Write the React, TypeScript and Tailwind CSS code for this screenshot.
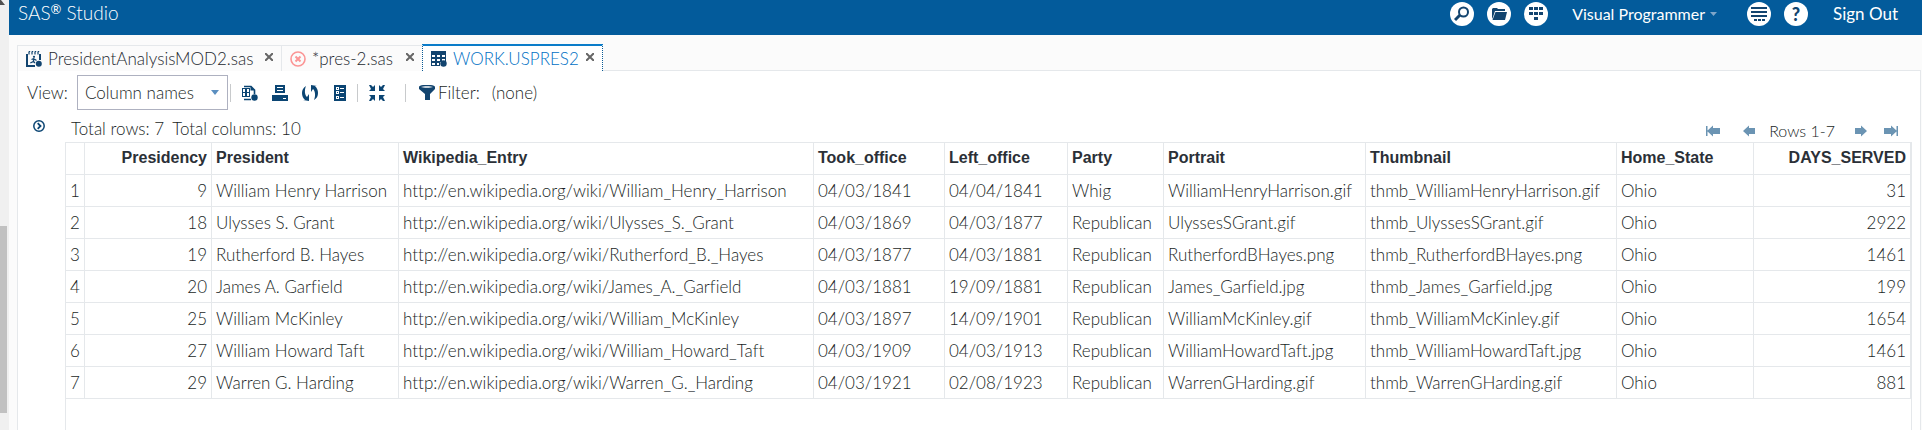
import { useState, type ReactNode } from "react";

type Align = "left" | "right";

const columns: { name: string; width: string; align: Align }[] = [
  { name: "Presidency", width: "w-[127px]", align: "right" },
  { name: "President", width: "w-[187px]", align: "left" },
  { name: "Wikipedia_Entry", width: "w-[415px]", align: "left" },
  { name: "Took_office", width: "w-[131px]", align: "left" },
  { name: "Left_office", width: "w-[123px]", align: "left" },
  { name: "Party", width: "w-[96px]", align: "left" },
  { name: "Portrait", width: "w-[202px]", align: "left" },
  { name: "Thumbnail", width: "w-[251px]", align: "left" },
  { name: "Home_State", width: "w-[137px]", align: "left" },
  { name: "DAYS_SERVED", width: "w-auto", align: "right" },
];

const wiki = "http://en.wikipedia.org/wiki/";

const rows: string[][] = [
  ["9", "William Henry Harrison", wiki + "William_Henry_Harrison", "04/03/1841", "04/04/1841", "Whig", "WilliamHenryHarrison.gif", "thmb_WilliamHenryHarrison.gif", "Ohio", "31"],
  ["18", "Ulysses S. Grant", wiki + "Ulysses_S._Grant", "04/03/1869", "04/03/1877", "Republican", "UlyssesSGrant.gif", "thmb_UlyssesSGrant.gif", "Ohio", "2922"],
  ["19", "Rutherford B. Hayes", wiki + "Rutherford_B._Hayes", "04/03/1877", "04/03/1881", "Republican", "RutherfordBHayes.png", "thmb_RutherfordBHayes.png", "Ohio", "1461"],
  ["20", "James A. Garfield", wiki + "James_A._Garfield", "04/03/1881", "19/09/1881", "Republican", "James_Garfield.jpg", "thmb_James_Garfield.jpg", "Ohio", "199"],
  ["25", "William McKinley", wiki + "William_McKinley", "04/03/1897", "14/09/1901", "Republican", "WilliamMcKinley.gif", "thmb_WilliamMcKinley.gif", "Ohio", "1654"],
  ["27", "William Howard Taft", wiki + "William_Howard_Taft", "04/03/1909", "04/03/1913", "Republican", "WilliamHowardTaft.jpg", "thmb_WilliamHowardTaft.jpg", "Ohio", "1461"],
  ["29", "Warren G. Harding", wiki + "Warren_G._Harding", "04/03/1921", "02/08/1923", "Republican", "WarrenGHarding.gif", "thmb_WarrenGHarding.gif", "Ohio", "881"],
];

function Icon({ children, className = "size-4" }: { children: ReactNode; className?: string }) {
  return (
    <svg viewBox="0 0 16 16" className={`${className} shrink-0`} fill="currentColor" aria-hidden="true">
      {children}
    </svg>
  );
}

function IconButton({ label, children, className = "" }: { label: string; children: ReactNode; className?: string }) {
  return (
    <button type="button" aria-label={label} title={label} className={`shrink-0 text-[#0b4573] ${className}`}>
      {children}
    </button>
  );
}

function RoundButton({ label, children }: { label: string; children: ReactNode }) {
  return (
    <button
      type="button"
      aria-label={label}
      title={label}
      className="flex size-6 shrink-0 items-center justify-center rounded-full bg-white text-[#12446f]"
    >
      {children}
    </button>
  );
}

const ProgramIcon = () => (
  <Icon>
    <path d="M0 3h2v11h7v2H0zM13 3h2v6h-2z" />
    <path d="M4 0L3 1v2.500M7 0L6 1v2.500M10 0L9 1v2.500M13 0l-1 1v2.500" fill="none" stroke="currentColor" strokeWidth="1.200" />
    <circle cx="8" cy="5.800" r="1.100" />
    <path d="M5.500 8.500l2-.7 1.500.7 1.500 1M8 8l-.7 2.500-3 1.500M7.500 10.500L9 12" fill="none" stroke="currentColor" strokeWidth="1.300" />
    <circle cx="12.800" cy="12.800" r="3" />
  </Icon>
);

const ErrorIcon = () => (
  <Icon className="size-4 text-[#fb9595]">
    <circle cx="8" cy="8" r="7" fill="none" stroke="currentColor" strokeWidth="1.600" />
    <path d="M5.500 5.500l5 5M10.500 5.500l-5 5" stroke="currentColor" strokeWidth="2" />
  </Icon>
);

const TableIcon = () => (
  <Icon>
    <path
      fillRule="evenodd"
      d="M0 0h15v11H9v4H0zM1 4v2h3V4zm5 0v2h3V4zm5 0v2h3V4zM1 8v2h3V8zm5 0v2h3V8zm5 0v2h3V8zM1 12v2h3v-2zm5 0v2h2v-2z"
    />
    <circle cx="12.500" cy="12.500" r="3.200" />
  </Icon>
);

const PropertiesIcon = () => (
  <Icon>
    <path fillRule="evenodd" d="M0 3h8v9H0zM1 4v3h2V4zm4 0v3h2V4zM1 8v3h2V8zm4 0v3h2V8z" />
    <path d="M2 1.500h7l3.500 3.500v4M2 14.500h7" fill="none" stroke="currentColor" strokeWidth="1.600" />
    <path d="M8.500 1v4.500H13z" />
    <circle cx="12.500" cy="12.500" r="3.200" />
  </Icon>
);

const PrintIcon = () => (
  <Icon>
    <path fillRule="evenodd" d="M3 0h10v8H3zM5 2v1h6V2zm0 3v1h6V5zM0 10h16v6H0zm11 3v1h3v-1z" />
  </Icon>
);

const RefreshIcon = () => (
  <Icon>
    <path d="M4 1C1 3 0 5 0 8c0 3 1 5 3 7H1l6 1V9L5 12C3 10 2 6 4 1z" />
    <path d="M12 15c3-2 4-4 4-7 0-3-1-5-3-7h2L9 0v7l2-3c2 2 3 6 1 11z" />
  </Icon>
);

const ColumnsIcon = () => (
  <Icon>
    <path
      fillRule="evenodd"
      d="M2 0h12v16H2zM4 2v3h3V2zm0 4v3h3V6zm0 5v3h3v-3zM8 3v1h4V3zm0 4v1h4V7zm0 5v1h4v-1z"
    />
    <path d="M5 3h1v1H5zM5 7h1v1H5zM5 12h1v1H5z" />
  </Icon>
);

const CollapseIcon = () => (
  <Icon>
    <path d="M0 0h2l2 2 2-2v6H0l2-2zM16 0h-2l-2 2-2-2v6h6l-2-2zM0 16h2l2-2 2 2v-6H0l2 2zM16 16h-2l-2-2-2 2v-6h6l-2 2z" />
  </Icon>
);

const FilterIcon = () => (
  <Icon>
    <path fillRule="evenodd" d="M0 2c0-3 16-3 16 0v2l-5 5v6H6V9L0 4zm2 0c2 1 10 1 12 0-2-1-10-1-12 0z" />
  </Icon>
);

function Arrow({ flip = false, bar = false }: { flip?: boolean; bar?: boolean }) {
  return (
    <svg viewBox="0 0 14 12" className={`h-3 w-3.5 ${flip ? "-scale-x-100" : ""}`} fill="currentColor" aria-hidden="true">
      <path d={bar ? "M1 6l6-5.500V3h7v6H7v2.500zM0 1h1.500v10H0z" : "M1 6l6-5.500V3h6v6H7v2.500z"} />
    </svg>
  );
}

function Tab({ icon, title, active = false }: { icon: ReactNode; title: string; active?: boolean }) {
  return (
    <div
      className={
        active
          ? "flex h-[27px] items-center border-x border-t-2 border-x-[#0b5a94] border-t-[#0a7cc9] bg-white pr-2 pl-2 [border-left-style:dotted] [border-right-style:dotted]"
          : "flex h-[26px] items-center border-t border-l border-[#e5e8eb] bg-[#fbfbfb] pr-2 pl-2"
      }
    >
      <button type="button" role="tab" aria-selected={active} className="flex items-center gap-[6px] text-[#12446f]">
        {icon}
        <span className={active ? "text-[#0070c4]" : "text-[#23282f]"}>{title}</span>
      </button>
      <button type="button" aria-label={`Close ${title}`} className="ml-auto text-[#666]">
        <svg viewBox="0 0 8 8" className="mb-1 size-2" aria-hidden="true">
          <path d="M0 0l8 8M8 0L0 8" stroke="currentColor" strokeWidth="2" />
        </svg>
      </button>
    </div>
  );
}

const Separator = ({ className = "" }: { className?: string }) => (
  <span className={`h-[18px] w-px shrink-0 bg-[#c8cacc] ${className}`} />
);

export default function App() {
  const [view, setView] = useState("Column names");

  return (
    <div className="flex min-h-screen bg-[#fbfbfb] font-[Lato,sans-serif] text-[17px] leading-5 font-light whitespace-nowrap text-[#1a1f26] [font-variant-ligatures:none]">
      <div className="flex w-[9px] shrink-0 flex-col justify-between bg-[#f0f0f0] pb-[17px]" aria-hidden="true">
        <svg viewBox="0 0 5 5" className="size-[5px]" fill="#505050">
          <path d="M0 0h1l4 5H0z" />
        </svg>
        <div className="h-[187px] w-[7px] bg-[#c1c1c1]" />
      </div>

      <div className="flex min-w-0 flex-1 flex-col">
        <header className="flex h-[35px] items-start bg-[#035b9b] pr-6 pl-[9px] font-normal text-white">
          <h1 className="mt-[3px] text-[19px] leading-5 font-light">
            SAS<sup className="top-[-6px] text-[13px] leading-none font-normal">®</sup> Studio
          </h1>
          <nav className="mt-px ml-auto flex items-center text-base">
            <div className="flex items-center gap-[13px]">
              <RoundButton label="Search">
                <Icon>
                  <circle cx="9.500" cy="6" r="4.500" fill="none" stroke="currentColor" strokeWidth="2" />
                  <path d="M6 9l-5 5" stroke="currentColor" strokeWidth="3" />
                </Icon>
              </RoundButton>
              <RoundButton label="Open">
                <Icon>
                  <path d="M1 13V3l1-1h4l1 1h7v2H4L2 11z" />
                  <path d="M4.500 6H16l-2 8H1.500z" />
                </Icon>
              </RoundButton>
              <RoundButton label="More application options">
                <Icon>
                  <path d="M1 1h4v3H1zM6 1h4v3H6zM11 1h4v3h-4zM1 6h4v3H1zM6 6h4v3H6zM11 6h4v3h-4zM6 11h4v3H6z" />
                </Icon>
              </RoundButton>
            </div>
            <button type="button" className="ml-6 flex items-center gap-[5px]">
              Visual Programmer
              <svg viewBox="0 0 7 4" className="h-1 w-[7px]" fill="#7fa6c9" aria-hidden="true">
                <path d="M0 0h7L3.500 4z" />
              </svg>
            </button>
            <div className="ml-[30px] flex items-center gap-[13px]">
              <RoundButton label="Options">
                <Icon>
                  <path d="M0 1h16v2H0zM0 5h16v2H0zM0 9h16v2H0zM3 13h3v2H3zM7 13h3v2H7zM11 13h3v2h-3z" />
                </Icon>
              </RoundButton>
              <RoundButton label="Help">
                <span className="text-lg leading-none font-black">?</span>
              </RoundButton>
            </div>
            <a href="#sign-out" className="ml-[25px] text-[17px]">
              Sign Out
            </a>
          </nav>
        </header>

        <div className="mt-[9px] mr-px ml-2 flex items-end" role="tablist">
          <div className="grid w-[264px]">
            <Tab icon={<ProgramIcon />} title="PresidentAnalysisMOD2.sas" />
          </div>
          <div className="grid w-[141px]">
            <Tab icon={<ErrorIcon />} title="*pres-2.sas" />
          </div>
          <div className="grid w-[181px]">
            <Tab icon={<TableIcon />} title="WORK.USPRES2" active />
          </div>
          <div className="flex-1 border-b border-[#e5e8eb]" />
        </div>

        <main className="mr-px ml-2 flex flex-1 flex-col border-x border-[#e5e8eb] bg-white">
          <div className="flex items-center pt-1 pl-[9px]">
            <label htmlFor="view" className="w-[50px] shrink-0">
              View:
            </label>
            <div className="grid w-[151px] shrink-0 items-center">
              <select
                id="view"
                value={view}
                onChange={(e) => setView(e.target.value)}
                className="col-start-1 row-start-1 h-[35px] appearance-none border border-[#aeb1c0] bg-white pl-[7px]"
              >
                <option>Column names</option>
                <option>Column labels</option>
              </select>
              <svg
                viewBox="0 0 8 5"
                className="pointer-events-none col-start-1 row-start-1 mr-[9px] h-[5px] w-2 justify-self-end"
                fill="#5b8fc0"
                aria-hidden="true"
              >
                <path d="M0 0h8L4 5z" />
              </svg>
            </div>
            <Separator className="ml-0.5" />
            <div className="ml-[11px] flex items-center gap-[14px]">
              <IconButton label="Table properties"><PropertiesIcon /></IconButton>
              <IconButton label="Print"><PrintIcon /></IconButton>
              <IconButton label="Refresh"><RefreshIcon /></IconButton>
              <IconButton label="Columns"><ColumnsIcon /></IconButton>
            </div>
            <Separator className="ml-[9px]" />
            <IconButton label="Maximize view" className="mx-[11px]"><CollapseIcon /></IconButton>
            <Separator className="ml-[9px]" />
            <button type="button" className="ml-[13px] flex items-center gap-[3px]">
              <span className="text-[#12446f]"><FilterIcon /></span>
              Filter:
            </button>
            <span className="ml-3">(none)</span>
          </div>

          <div className="flex flex-1 pr-[8px]">
            <div className="w-[47px] shrink-0 pt-[10px] pl-[15px]">
              <IconButton label="Expand columns" className="block">
                <svg viewBox="0 0 12 12" className="size-3" fill="none" stroke="currentColor" aria-hidden="true">
                  <circle cx="6" cy="6" r="5.200" strokeWidth="1.500" />
                  <path d="M4.700 3.200L7.500 6 4.700 8.800" strokeWidth="1.800" />
                </svg>
              </IconButton>
            </div>
            <div className="flex min-w-0 flex-1 flex-col">
              <div className="flex h-8 items-center pt-[6px] pl-[6px]">
                <span className="mr-2">Total rows: 7</span>
                <span>Total columns: 10</span>
                <div className="mt-1 mr-[14px] ml-auto flex items-center text-[#6b94b3]">
                  <button type="button" aria-label="First page" className="mr-[22px]"><Arrow bar /></button>
                  <button type="button" aria-label="Previous page" className="mr-[13px]"><Arrow /></button>
                  <span className="text-base text-[#1a1f26]">Rows 1-7</span>
                  <button type="button" aria-label="Next page" className="ml-[19px]"><Arrow flip /></button>
                  <button type="button" aria-label="Last page" className="ml-4"><Arrow flip bar /></button>
                </div>
              </div>
              <div className="flex-1 border-x border-[#e5e8eb]">
                <table className="w-full table-fixed border-separate border-spacing-0 border-t border-[#e5e8eb]">
                  <thead>
                    <tr className="h-8 font-['Liberation_Sans',sans-serif] text-base text-[#2b3037]">
                      <th className="w-[19px] border-r border-b border-[#e5e8eb]" aria-label="Row" />
                      {columns.map((c) => (
                        <th
                          key={c.name}
                          scope="col"
                          className={`${c.width} border-r border-b border-[#e5e8eb] px-1 pb-0.5 font-bold ${c.align === "right" ? "text-right" : "text-left"}`}
                        >
                          {c.name}
                        </th>
                      ))}
                    </tr>
                  </thead>
                  <tbody>
                    {rows.map((row, i) => (
                      <tr key={row[0]} className="h-8">
                        <td className="border-r border-b border-[#e5e8eb] pl-1">{i + 1}</td>
                        {row.map((value, j) => (
                          <td
                            key={columns[j].name}
                            className={`border-r border-b border-[#e5e8eb] px-1 ${columns[j].align === "right" ? "text-right" : "text-left"}`}
                          >
                            {value}
                          </td>
                        ))}
                      </tr>
                    ))}
                  </tbody>
                </table>
              </div>
            </div>
          </div>
        </main>
      </div>
    </div>
  );
}
